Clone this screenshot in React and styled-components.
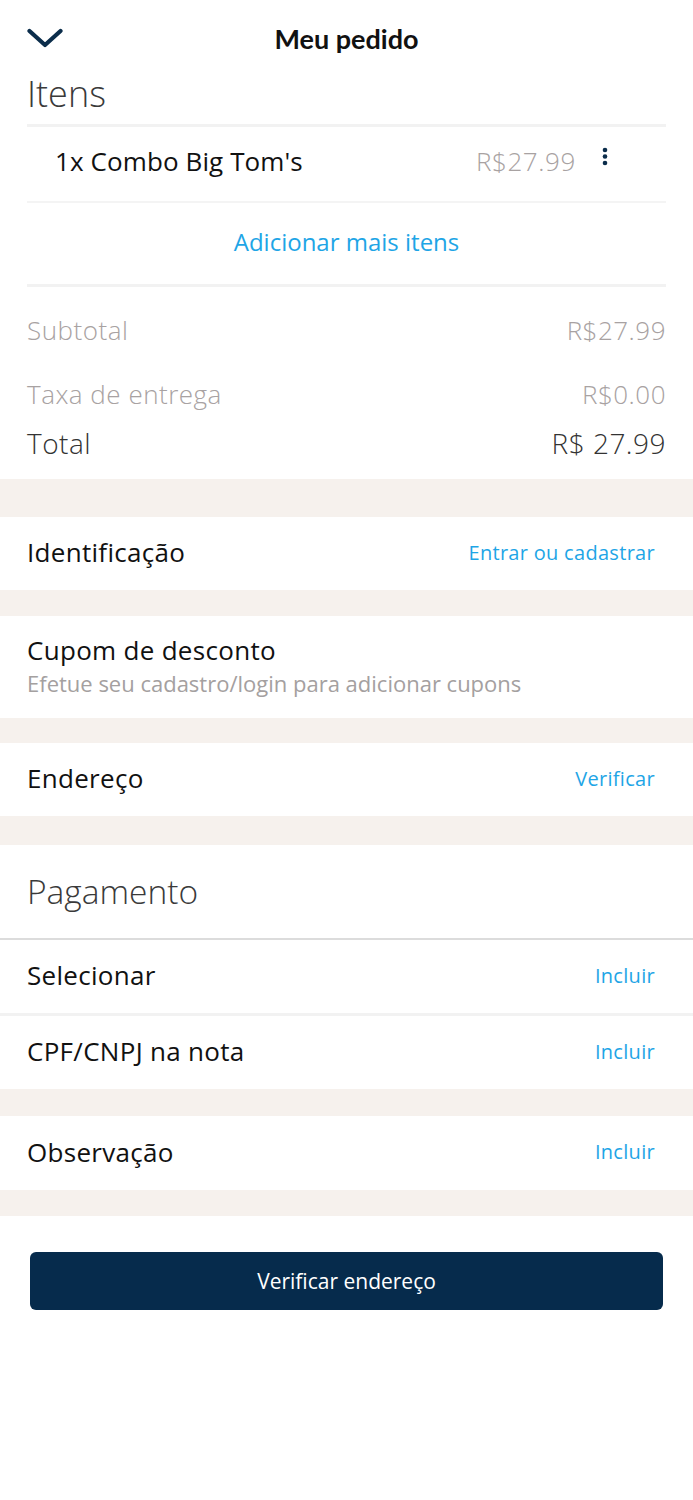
import React from "react";
import styled, { createGlobalStyle } from "styled-components";

const Global = createGlobalStyle`
  html, body { margin: 0; padding: 0; background: #fff; }
  body { font-family: "Open Sans", "Noto Sans", sans-serif; color: #111; }
  * { box-sizing: border-box; }
`;

const Page = styled.div`
  width: 693px;
  min-height: 1500px;
  background: #fff;
  display: flex;
  flex-direction: column;
`;

const Header = styled.header`
  height: 76px;
  display: grid;
  grid-template-columns: 80px 1fr 80px;
  align-items: center;
  padding-left: 27px;
`;

const BackButton = styled.button`
  border: 0;
  background: none;
  padding: 0;
  width: 36px;
  height: 20px;
  display: flex;
  cursor: pointer;
`;

const Title = styled.h1`
  margin: 0 0 0 -27px;
  text-align: center;
  font-family: Lato, sans-serif;
  font-weight: 700;
  font-size: 27px;
  color: #111;
`;

const Summary = styled.section`
  padding: 0 27px 14px;
`;

const SectionTitle = styled.h2`
  margin: 0;
  font-weight: 300;
  font-size: ${p => p.$size || 36}px;
  color: #3a3a3a;
  line-height: 1;
`;

const ItemsTitle = styled(SectionTitle)`
  padding: 0 0 12px;
`;

const Divider = styled.div`
  height: 3px;
  background: #f2f2f2;
`;

const ThinDivider = styled.div`
  height: 2px;
  background: #f4f4f4;
`;

const ItemRow = styled.div`
  height: 74px;
  display: flex;
  align-items: center;
  padding: 0 58px 6px 28px;
  font-size: 26px;
  letter-spacing: 0.1px;
`;

const ItemName = styled.span`
  flex: 1;
  color: #111;
`;

const ItemPrice = styled.span`
  color: #a8a2a2;
  font-weight: 300;
  letter-spacing: 0.6px;
`;

const MoreButton = styled.button`
  border: 0;
  background: none;
  padding: 0;
  margin-left: 26px;
  align-self: flex-start;
  margin-top: 20px;
  display: flex;
`;

const AddMore = styled.div`
  height: 81px;
  display: flex;
  align-items: center;
  justify-content: center;
  color: #1ea5e6;
  font-size: 24px;
  padding-bottom: 4px;
`;

const TotalsList = styled.div`
  display: flex;
  flex-direction: column;
  padding-top: 21px;
`;

const TotalLine = styled.div`
  display: flex;
  justify-content: space-between;
  align-items: center;
  height: 44px;
  margin-top: ${p => p.$gap || 0}px;
  font-weight: 300;
  letter-spacing: 0.5px;
  font-size: ${p => (p.$strong ? 28 : 26)}px;
  color: ${p => (p.$strong ? "#333" : "#a8a2a2")};
`;

const Band = styled.div`
  height: ${p => p.$h}px;
  background: #f6f1ed;
`;

const Row = styled.div`
  height: ${p => p.$h || 73}px;
  display: flex;
  align-items: center;
  justify-content: space-between;
  padding: 0 38px 3px 27px;
`;

const RowLabel = styled.span`
  font-size: 26px;
  letter-spacing: 0.3px;
  color: #111;
`;

const RowAction = styled.a`
  font-size: 20px;
  letter-spacing: 0.3px;
  color: #1ea5e6;
  text-decoration: none;
`;

const CouponBlock = styled.div`
  height: 102px;
  display: flex;
  flex-direction: column;
  justify-content: center;
  padding: 0 27px 4px;
`;

const CouponHint = styled.span`
  font-size: 22px;
  color: #a4a0a0;
`;

const PaymentHead = styled.div`
  height: 95px;
  display: flex;
  align-items: center;
  padding: 0 27px;
  border-bottom: 2px solid #dcdcdc;
`;

const Footer = styled.div`
  padding: 36px 30px;
`;

const PrimaryButton = styled.button`
  width: 100%;
  height: 58px;
  border: 0;
  border-radius: 6px;
  background: #062b4c;
  color: #fff;
  font-family: "Open Sans", sans-serif;
  font-size: 21px;
  cursor: pointer;
`;

const Chevron = () => (
  <svg width="36" height="20" viewBox="0 0 36 20">
    <path d="M2.5 3 L18 17 L33.5 3" fill="none" stroke="#0b2d4b" strokeWidth="4.2" strokeLinecap="round" strokeLinejoin="round" />
  </svg>
);

const Dots = () => (
  <svg width="6" height="20" viewBox="0 0 6 20">
    <circle cx="3" cy="3" r="2.3" fill="#0b2d4b" />
    <circle cx="3" cy="9.5" r="2.3" fill="#0b2d4b" />
    <circle cx="3" cy="16" r="2.3" fill="#0b2d4b" />
  </svg>
);

export default function App() {
  return (
    <Page>
      <Global />
      <Header>
        <BackButton aria-label="Fechar"><Chevron /></BackButton>
        <Title>Meu pedido</Title>
        <span />
      </Header>

      <Summary>
        <ItemsTitle>Itens</ItemsTitle>
        <Divider />
        <ItemRow>
          <ItemName>1x Combo Big Tom's</ItemName>
          <ItemPrice>R$27.99</ItemPrice>
          <MoreButton aria-label="Opções"><Dots /></MoreButton>
        </ItemRow>
        <ThinDivider />
        <AddMore>Adicionar mais itens</AddMore>
        <Divider />
        <TotalsList>
          <TotalLine><span>Subtotal</span><span>R$27.99</span></TotalLine>
          <TotalLine $gap={20}><span>Taxa de entrega</span><span>R$0.00</span></TotalLine>
          <TotalLine $gap={5} $strong><span>Total</span><span>R$ 27.99</span></TotalLine>
        </TotalsList>
      </Summary>

      <Band $h={38} />
      <Row>
        <RowLabel>Identificação</RowLabel>
        <RowAction>Entrar ou cadastrar</RowAction>
      </Row>
      <Band $h={26} />
      <CouponBlock>
        <RowLabel>Cupom de desconto</RowLabel>
        <CouponHint>Efetue seu cadastro/login para adicionar cupons</CouponHint>
      </CouponBlock>
      <Band $h={25} />
      <Row>
        <RowLabel>Endereço</RowLabel>
        <RowAction>Verificar</RowAction>
      </Row>
      <Band $h={29} />
      <PaymentHead>
        <SectionTitle $size={33.5}>Pagamento</SectionTitle>
      </PaymentHead>
      <Row>
        <RowLabel>Selecionar</RowLabel>
        <RowAction>Incluir</RowAction>
      </Row>
      <Divider />
      <Row>
        <RowLabel>CPF/CNPJ na nota</RowLabel>
        <RowAction>Incluir</RowAction>
      </Row>
      <Band $h={27} />
      <Row $h={74}>
        <RowLabel>Observação</RowLabel>
        <RowAction>Incluir</RowAction>
      </Row>
      <Band $h={26} />
      <Footer>
        <PrimaryButton>Verificar endereço</PrimaryButton>
      </Footer>
    </Page>
  );
}
